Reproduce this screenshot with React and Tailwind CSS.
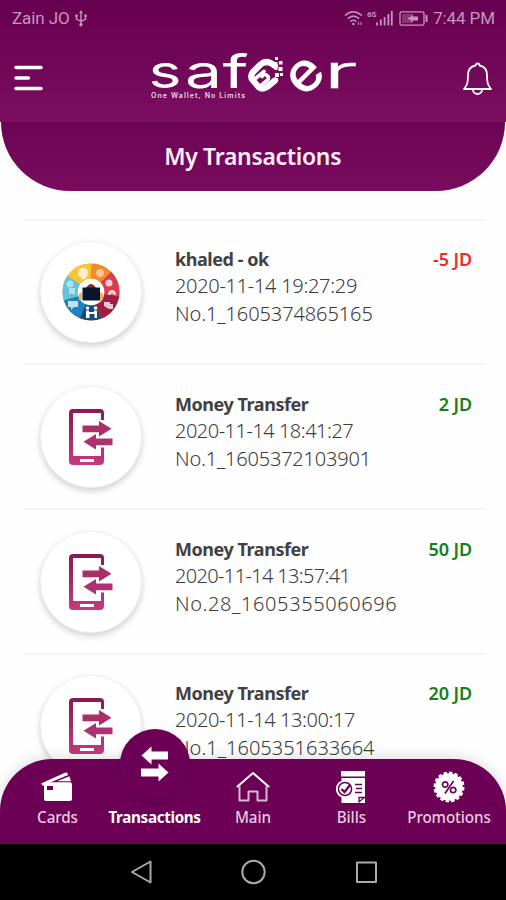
const transactions = [
  { id: 1, kind: 'service', title: 'khaled - ok', date: '2020-11-14 19:27:29', number: 'No.1_1605374865165', amount: '-5 JD' },
  { id: 2, kind: 'transfer', title: 'Money Transfer', date: '2020-11-14 18:41:27', number: 'No.1_1605372103901', amount: '2 JD' },
  { id: 3, kind: 'transfer', title: 'Money Transfer', date: '2020-11-14 13:57:41', number: 'No.28_1605355060696', amount: '50 JD' },
  { id: 4, kind: 'transfer', title: 'Money Transfer', date: '2020-11-14 13:00:17', number: 'No.1_1605351633664', amount: '20 JD' },
];

const dateTracking = {
  1: 'tracking-[-0.3px]',
  2: 'tracking-[-0.5px]',
  3: 'tracking-[-0.65px]',
  4: 'tracking-[-0.4px]',
};

const numberTracking = {
  1: 'tracking-[-0.1px]',
  2: 'tracking-[-0.2px]',
  3: 'tracking-[0.6px]',
  4: 'tracking-[0px]',
};

const StatusBar = () => (
  <div className="flex h-9 items-center justify-between pl-3 pr-[11px] font-[Roboto,sans-serif] text-[17px] leading-9 text-[#c795bb]">
    <div className="flex items-center gap-[5px]">
      <span className="tracking-[-0.1px]">Zain JO</span>
      <svg width="12" height="17" viewBox="0 0 12 17" fill="none" stroke="currentColor" strokeWidth="1.4">
        <path d="M6 3v11M1.5 6v3L6 11.5M10.5 6v3L6 11.5" />
        <path d="M6 0l2 3.2H4zM.3 4.5h2.4v2.2H.3zM9.3 4.5h2.4v2.2H9.3z" fill="currentColor" stroke="none" />
        <circle cx="6" cy="14.8" r="1.7" fill="currentColor" stroke="none" />
      </svg>
    </div>
    <div className="flex items-center">
      <svg width="84" height="18" viewBox="0 0 84 18" fill="none" stroke="currentColor" strokeWidth="1.5">
        <path d="M1 6.5q8-7.5 17 0M3.8 9.6q5.7-5 11.3 0M6.4 12.6q3-2.6 6 0" />
        <circle cx="9.4" cy="15" r="1.3" fill="currentColor" stroke="none" />
        <path d="M14.500 13v3M17 13v3" strokeWidth="1" />
        <text x="23" y="7.5" fill="currentColor" stroke="none" fontSize="8" fontWeight="700" fontFamily="Roboto">6S</text>
        <path d="M33 16.5v-3M36.8 16.5v-6M40.6 16.5V8M44.4 16.5V5M47.8 16.5V2" strokeWidth="1.8" />
        <rect x="56" y="2.8" width="24" height="13.4" rx="1.6" strokeWidth="1.3" />
        <path d="M58 5h11v9H58z" fill="currentColor" fillOpacity=".35" stroke="none" />
        <path d="M63.5 9.5l4-2.3V5.5l1.5 2h5v4h-5l-1.5 2v-1.7z" fill="currentColor" stroke="none" />
        <path d="M82.5 6v7" strokeWidth="2" />
      </svg>
      <span className="ml-[5px] tracking-[-0.1px]">7:44 PM</span>
    </div>
  </div>
);

const Logo = () => (
  <svg className="overflow-visible" width="208" height="52" viewBox="150 50 208 52" fill="#fff" fontFamily="Inter, sans-serif">
    <text x="149.5" y="88" fontSize="46" fontWeight="400" textLength="33" lengthAdjust="spacingAndGlyphs">s</text>
    <text x="186" y="88" fontSize="46" fontWeight="400" textLength="37" lengthAdjust="spacingAndGlyphs">a</text>
    <text x="223.5" y="88" fontSize="46" fontWeight="400" textLength="26" lengthAdjust="spacingAndGlyphs">f</text>
    <g fill="none" stroke="#fff" strokeLinecap="round" strokeLinejoin="round">
      <path d="M276 66l-3.5-2.5q-6-3.500-11 1l-7.500 7.500q-3.500 4.500 0 8.500l5.500 6.500q4 3 8.500 0l8-6.500" strokeWidth="6.2" />
      <path d="M263 76.500q2-3.500 5-1t0 5l-6 5M265 71.500l-8 6.500" strokeWidth="3.600" />
    </g>
    <path d="M276 57h3v3h-3zM280 61h3.5v3.5H280zM275 62h3.5v3.5H275zM279.5 67h4v4h-4zM275.5 67h3v3h-3zM281 73h3v3h-3zM276 73h4v4h-4zM275 78h4v4h-4z" />
    <text transform="translate(306.5 76) rotate(-45) scale(1.26 1.2)" x="0" y="12.5" textAnchor="middle" fontSize="46" fontWeight="500">e</text>
    <text x="324.5" y="88" fontSize="46" fontWeight="300" textLength="34" lengthAdjust="spacingAndGlyphs" stroke="#fff" strokeWidth=".5">r</text>
    <text x="152" y="98.3" fontSize="7" fontWeight="600" fillOpacity=".85" textLength="94">One Wallet, No Limits</text>
  </svg>
);

const Header = () => (
  <header>
    <div className="h-[122px] bg-linear-to-b from-[#67004f] to-[#7b0e60]">
      <StatusBar />
      <div className="flex items-center justify-between px-[14px] pt-3.5">
        <svg className="mt-1" width="29" height="28" viewBox="0 0 29 28" fill="none" stroke="#fff" strokeWidth="3.6" strokeLinecap="round">
          <path d="M2 3.5h25M2 14h12.5M2 24.5h25" />
        </svg>
        <div>
          <Logo />
        </div>
        <svg className="mt-1" width="29" height="33" viewBox="0 0 29 33" fill="none" stroke="#fff" strokeWidth="1.8" strokeLinejoin="round">
          <path d="M12.5 3.5a2 2 0 0 1 4 0c5 1 7.5 4.5 7.5 9.5 0 7 .5 10 4 14H1c3.5-4 4-7 4-14 0-5 2.5-8.5 7.5-9.5zM10 27.5c0 6 9 6 9 0" />
        </svg>
      </div>
    </div>
    <div className="mx-px h-[69px] rounded-b-[70px] bg-linear-to-b from-[#6c0454] to-[#7a0b5d] pt-[15px] text-center text-[24px] leading-[38px] font-semibold text-[#fbeef8]">
      <span className="inline-block scale-x-[0.955] whitespace-nowrap tracking-[-0.3px]">My Transactions</span>
    </div>
  </header>
);

const ServiceIcon = () => (
  <svg width="58" height="58" viewBox="-29 -29 58 58">
    <g fill="none" strokeWidth="15">
      <circle r="21" stroke="#f6a325" />
      <circle r="21" stroke="#f28a2e" pathLength="360" strokeDasharray="45 315" strokeDashoffset="90" />
      <circle r="21" stroke="#d93c50" pathLength="360" strokeDasharray="54 306" strokeDashoffset="45" />
      <circle r="21" stroke="#a21d43" pathLength="360" strokeDasharray="60 300" strokeDashoffset="-9" />
      <circle r="21" stroke="#114c7b" pathLength="360" strokeDasharray="45 315" strokeDashoffset="-69" />
      <circle r="21" stroke="#1d83c0" pathLength="360" strokeDasharray="50 310" strokeDashoffset="-113" />
      <circle r="21" stroke="#63c3d8" pathLength="360" strokeDasharray="52 308" strokeDashoffset="-163" />
      <circle r="21" stroke="#fbc435" pathLength="360" strokeDasharray="55 305" strokeDashoffset="-215" />
    </g>
    <g fill="#fff" fillOpacity=".75">
      <path d="M-13-19q0-5 5-5t5 5q0 3-2 4v2h-5v-2q-3 0-3-4z" />
      <circle cx="9" cy="-19" r="4" fillOpacity=".5" />
      <circle cx="18" cy="-9" r="3.5" />
      <circle cx="-21" cy="-8" r="3.5" fillOpacity=".5" />
      <path d="M-22-4h6v6h-6z" fillOpacity=".5" />
      <path d="M-23 9h10v6h-4l-3 3v-3h-3zM13 10h6v2h3v5h-4l-5-3zM17 3q0-5 4-5t4 5h-2q-2-3-4 0z" />
    </g>
    <g fill="#fff">
      <circle cx="-3.5" cy="16" r="1.8" />
      <circle cx="4.5" cy="16" r="1.8" />
      <path d="M-5 18.5h3V20h5v-1.500h3V26H3.500v-4h-5v4H-5z" />
    </g>
    <path d="M-5-4q5-8 10 0z" fill="#7c3322" />
    <path d="M-8.500-4.500H9V8.500H-8.500z" fill="#07142b" />
    <path d="M-12 2l3-2v8h-3zM9 0l3 2v6H9z" fill="#f0b451" />
  </svg>
);

const TransferIcon = () => (
  <svg width="44" height="58" viewBox="0 0 44 58">
    <defs>
      <linearGradient id="phone" x1="0" y1="0" x2="0" y2="1">
        <stop offset="0" stopColor="#8a1754" />
        <stop offset="1" stopColor="#c63a7d" />
      </linearGradient>
    </defs>
    <path
      d="M4 1h27q4 0 4 4v7h-3V5H4v43h28V39.5h3V53q0 4-4 4H4q-4 0-4-4V5q0-4 4-4zM11 51v3h14v-3z"
      fillRule="evenodd"
      fill="url(#phone)"
    />
    <path d="M13.5 17.5H30v-4.5l12.5 7.8L30 28.5V24.3H13.5z" fill="#a92e69" />
    <path d="M43.5 30.5H27v-4.5l-12.5 7.8L27 41.5V37.3h16.5z" fill="#b03170" />
  </svg>
);

const TransactionRow = ({ item }) => (
  <li className="flex h-[144.8px] border-t-2 border-[#f4f4f4]">
    <div className="mt-[20.5px] ml-4 flex size-[102px] shrink-0 items-center justify-center rounded-full border border-[#f1f1f1] bg-white shadow-[0_3px_6px_rgba(0,0,0,0.18)]">
      {item.kind === 'service' ? <ServiceIcon /> : <TransferIcon />}
    </div>
    <div className="mt-[24.5px] ml-[33px] grow whitespace-nowrap text-[#3c3c3c]">
      <p className="text-[18px] leading-7 font-bold tracking-[-0.45px] text-[#414141]">{item.title}</p>
      <p className={`text-[20px] leading-[26px] font-light ${dateTracking[item.id]}`}>{item.date}</p>
      <p className={`text-[20px] leading-[29px] font-light ${numberTracking[item.id]}`}>{item.number}</p>
    </div>
    <p
      className={`mt-[24.5px] mr-[14px] text-[18px] leading-7 font-semibold tracking-[-0.1px] whitespace-nowrap ${
        item.amount.startsWith('-') ? 'text-[#ee2a24]' : 'text-[#14801a]'
      }`}
    >
      {item.amount}
    </p>
  </li>
);

const CardsIcon = () => (
  <svg width="32" height="30" viewBox="0 0 32 30" fill="#fff">
    <path d="M0 11.5L24 .8q2-.8 2.7 1l.4 1.2L8 11H5l-3 3z" />
    <path d="M16 9.2L28.5 4.2l1.5 5z" />
    <path fillRule="evenodd" d="M5 10.2h24q2 0 2 2V27q0 2-2 2H5q-2 0-2-2V12.200q0-2 2-2zM6 14v4h6v-4z" />
  </svg>
);

const SwapIcon = () => (
  <svg width="28" height="36" viewBox="0 0 28 36" fill="#fff">
    <path d="M.5 9.5L10.5.5v5H27v8H10.500v5z" />
    <path d="M27.5 26.5l-10-9v5H0v8h17.500v5z" />
  </svg>
);

const HomeIcon = () => (
  <svg width="34" height="30" viewBox="0 0 34 30" fill="none" stroke="#d9b9d0" strokeWidth="2" strokeLinejoin="round" strokeLinecap="round">
    <path d="M1.5 14.5L17 1l15.5 13.5" stroke="#fff" />
    <path d="M3.5 14v14.5h9V19.5h9v9h9V14" />
  </svg>
);

const BillsIcon = () => (
  <svg width="30" height="33" viewBox="0 0 30 33">
    <path d="M5 0h24v5.5H5z" fill="#fff" />
    <path d="M5.5 7H29v25H5.500z" fill="#fff" />
    <path d="M19 13.5h7M20 17.5h6M19 21.5h7" stroke="#6b0054" strokeWidth="1.3" />
    <path d="M23 31v-4.500h5.500z" fill="none" stroke="#6b0054" strokeWidth="1.3" />
    <circle cx="9" cy="18" r="8.2" fill="#6b0054" stroke="#fff" strokeWidth="1.8" />
    <circle cx="9" cy="18" r="5.8" fill="#fff" />
    <path d="M5.5 18l3 3 5.500-7" fill="none" stroke="#6b0054" strokeWidth="2.2" />
  </svg>
);

const PromotionsIcon = () => (
  <svg width="32" height="32" viewBox="-16 -16 32 32">
    <circle r="13.8" fill="#fff" />
    <circle r="14" fill="none" stroke="#fff" strokeWidth="3" pathLength="64" strokeDasharray="2.5 1.5" />
    <g fill="none" stroke="#6b0054" strokeWidth="1.7">
      <circle cx="-3.8" cy="-2.5" r="2.7" />
      <circle cx="4.2" cy="3" r="2.7" />
      <path d="M4.5-6L-4 6.5" />
    </g>
  </svg>
);

const navItems = [
  { label: 'Cards', icon: <CardsIcon /> },
  { label: 'Transactions', active: true },
  { label: 'Main', icon: <HomeIcon /> },
  { label: 'Bills', icon: <BillsIcon /> },
  { label: 'Promotions', icon: <PromotionsIcon /> },
];

const BottomNav = () => (
  <nav className="relative z-10 grid h-[85px] shrink-0 grid-cols-5 rounded-t-[52px] bg-[#6b0054] px-2 shadow-[0_-2px_14px_rgba(0,0,0,0.13)]">
    {navItems.map((item) => (
      <div key={item.label} className="relative flex flex-col items-center">
        {item.active && (
          <div className="absolute top-[-30px] flex size-[70px] items-center justify-center rounded-full bg-[#6b0054] shadow-[0_2px_5px_rgba(60,0,50,0.25)]">
            <SwapIcon />
          </div>
        )}
        <div className="flex h-[56px] items-center justify-center">{!item.active && item.icon}</div>
        <span
          className={`relative -mt-[9px] scale-x-[0.95] text-[16px] leading-[22px] whitespace-nowrap ${
            item.active ? 'font-bold tracking-[-0.35px] text-white' : 'font-medium tracking-[-0.1px] text-[#e6cbdf]'
          }`}
        >
          {item.label}
        </span>
      </div>
    ))}
  </nav>
);

const SystemBar = () => (
  <div className="flex h-14 shrink-0 items-center justify-center bg-black">
    <svg width="250" height="28" viewBox="0 0 250 28" fill="none" stroke="#aaa" strokeWidth="2" strokeLinejoin="round">
      <path d="M4 14L22.5 3.5v21z" />
      <circle cx="125.5" cy="14" r="11.2" />
      <path d="M229 4.5h19V24h-19z" />
    </svg>
  </div>
);

export default function App() {
  return (
    <div className="flex h-[900px] w-[506px] flex-col overflow-hidden bg-[#fefefe] font-['Noto_Sans',sans-serif]">
      <Header />
      <ul className="ml-6 min-h-0 w-[462px] flex-1 pt-[27.5px]">
        {transactions.map((item) => (
          <TransactionRow key={item.id} item={item} />
        ))}
      </ul>
      <BottomNav />
      <SystemBar />
    </div>
  );
}
